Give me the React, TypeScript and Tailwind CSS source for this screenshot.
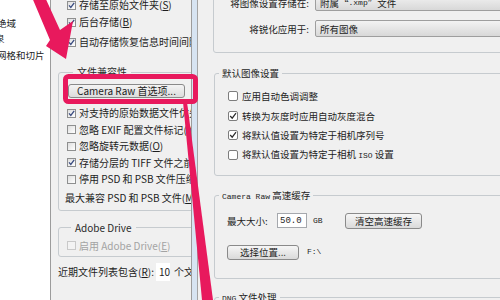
import React from "react";

function LCheck({ checked = false, disabled = false }: { checked?: boolean; disabled?: boolean }) {
  return (
    <span
      className={
        disabled
          ? "relative w-[9px] h-[9px] shrink-0 border border-[#c9c9c9] bg-[#f3f3f3]"
          : "relative w-[9px] h-[9px] shrink-0 border border-[#8e8f8f] bg-gradient-to-br from-[#dedede] to-[#ffffff]"
      }
    >
      {checked && (
        <svg viewBox="0 0 7 7" className="absolute inset-0 w-full h-full">
          <path d="M1 3.4 L2.8 5.4 L6.2 0.9" fill="none" stroke="#3a4c80" strokeWidth="1.3" />
        </svg>
      )}
    </span>
  );
}

function RCheck({ checked = false }: { checked?: boolean }) {
  return (
    <span className="relative w-[10px] h-[10px] shrink-0 border border-[#7d7d7d] rounded-[2px] bg-white">
      {checked && (
        <svg viewBox="0 0 8 8" className="absolute inset-0 w-full h-full">
          <path d="M1.2 4 L3.2 6.2 L7 1.2" fill="none" stroke="#2b2b2b" strokeWidth="1.2" />
        </svg>
      )}
    </span>
  );
}

const mono = "font-[family-name:'Liberation_Mono',monospace]";

export default function App() {
  return (
    <div className="relative w-[500px] h-[300px] overflow-hidden flex bg-white text-[#1d1d1d] font-[family-name:'Noto_Sans_CJK_SC','Noto_Sans',sans-serif]">
      {/* white left column with cut-off text */}
      <div className="w-[50px] shrink-0 overflow-hidden flex flex-col text-[9.5px] leading-[10px] text-[#222] whitespace-nowrap">
        <span className="mt-[18px] -ml-[3px]">绝域</span>
        <span className="mt-[5px] -ml-[5px]">泉</span>
        <span className="mt-[7px] -ml-[3px]">网格和切片</span>
      </div>

      {/* left dialog */}
      <div className="w-[142px] shrink-0 h-full overflow-hidden border-x border-[#9c9c9c] bg-[#f0f0f0] flex flex-col text-[10px] leading-[12px] whitespace-nowrap">
        <div className="-mt-[3px] h-[16px] flex items-center pl-[16px] gap-[3px]">
          <LCheck checked />
          <span>存储至原始文件夹(<u>S</u>)</span>
        </div>
        <div className="mt-[1px] h-[16px] flex items-center pl-[16px] gap-[3px]">
          <LCheck checked />
          <span>后台存储(<u>B</u>)</span>
        </div>
        <div className="mt-[4px] h-[16px] flex items-center pl-[16px] gap-[3px]">
          <LCheck checked />
          <span>自动存储恢复信息时间间隔</span>
        </div>

        <fieldset className="mt-[16px] ml-[7px] w-[170px] shrink-0 border border-[#c6cbcf] rounded-[3px] flex flex-col">
          <legend className="ml-[14px] px-[4px] leading-[12px] text-[#2a2a2a]">文件兼容性</legend>
          <div className="mt-[6px] ml-[9px] w-[117px] h-[14px] flex items-center justify-center border border-[#8a8a8a] rounded-[3px] bg-gradient-to-b from-[#f4f4f4] to-[#dcdcdc] text-[10px]">
            Camera Raw 首选项...
          </div>
          <div className="mt-[7px] h-[16.5px] flex items-center pl-[8px] gap-[3px]">
            <LCheck checked />
            <span>对支持的原始数据文件优先</span>
          </div>
          <div className="h-[16.5px] flex items-center pl-[8px] gap-[3px]">
            <LCheck />
            <span>忽略 EXIF 配置文件标记(<u>X</u>)</span>
          </div>
          <div className="h-[16.5px] flex items-center pl-[8px] gap-[3px]">
            <LCheck />
            <span>忽略旋转元数据(<u>O</u>)</span>
          </div>
          <div className="h-[16.5px] flex items-center pl-[8px] gap-[3px]">
            <LCheck checked />
            <span>存储分层的 TIFF 文件之前询问</span>
          </div>
          <div className="h-[16.5px] flex items-center pl-[8px] gap-[3px]">
            <LCheck />
            <span>停用 PSD 和 PSB 文件压缩</span>
          </div>
          <div className="mt-[2px] h-[16px] flex items-center pl-[6px] mb-[4px]">
            <span>最大兼容 PSD 和 PSB 文件(<u>M</u>):</span>
          </div>
        </fieldset>

        <fieldset className="mt-[11px] ml-[7px] w-[170px] shrink-0 border border-[#c6cbcf] rounded-[3px] flex flex-col">
          <legend className="ml-[12px] px-[4px] leading-[12px] text-[#2a2a2a]">Adobe Drive</legend>
          <div className="mt-[4px] h-[16px] flex items-center pl-[8px] gap-[3px] mb-[2px] text-[#a3a3a3]">
            <LCheck disabled />
            <span>启用 Adobe Drive(<u>E</u>)</span>
          </div>
        </fieldset>

        <div className="mt-[6px] h-[18px] flex items-center pl-[7px]">
          <span>近期文件列表包含(<u>R</u>):</span>
          <span className="ml-[2px] w-[20px] h-[18px] bg-white flex items-center pl-[3px]">10</span>
          <span className="ml-[4px]">个文件</span>
        </div>
      </div>

      {/* light blue window edge */}
      <div className="w-[5px] shrink-0 h-full bg-[#d7e4f2]" />

      {/* right dialog */}
      <div className="flex-1 h-full overflow-hidden border-l border-[#a4a4a4] bg-[#f0f0f0] flex flex-col text-[9.5px] leading-[12px] whitespace-nowrap">
        <div className="-mt-[10px] ml-[15px] w-[330px] shrink-0 border border-[#c6cbcf] rounded-[3px] pt-[3px] pb-[15px] flex flex-col">
          <div className="h-[17px] flex items-center">
            <span className="w-[96px] text-right pr-[1px]">将图像设置存储在:</span>
            <div className="ml-[5px] flex-1 h-[17px] border border-[#9e9e9e] rounded-[2px] bg-gradient-to-b from-[#f3f3f3] to-[#d8d8d8] flex items-center pl-[4px]">
              附属“<span className={`${mono} text-[8px]`}>.xmp</span>”文件
            </div>
          </div>
          <div className="mt-[9px] h-[17px] flex items-center">
            <span className="w-[96px] text-right pr-[1px]">将锐化应用于:</span>
            <div className="ml-[5px] flex-1 h-[17px] border border-[#9e9e9e] rounded-[2px] bg-gradient-to-b from-[#f3f3f3] to-[#d8d8d8] flex items-center pl-[4px]">
              所有图像
            </div>
          </div>
        </div>

        <fieldset className="mt-[14px] ml-[16px] w-[330px] shrink-0 border border-[#c6cbcf] rounded-[3px] flex flex-col pb-[10px]">
          <legend className="ml-[4px] px-[3px] leading-[12px]">默认图像设置</legend>
          <div className="mt-[7.5px] h-[19.5px] flex items-center pl-[13px] gap-[4px]">
            <RCheck />
            <span>应用自动色调调整</span>
          </div>
          <div className="h-[19.5px] flex items-center pl-[13px] gap-[4px]">
            <RCheck checked />
            <span>转换为灰度时应用自动灰度混合</span>
          </div>
          <div className="h-[19.5px] flex items-center pl-[13px] gap-[4px]">
            <RCheck checked />
            <span>将默认值设置为特定于相机序列号</span>
          </div>
          <div className="h-[19.5px] flex items-center pl-[13px] gap-[4px]">
            <RCheck />
            <span>
              将默认值设置为特定于相机 <span className={`${mono} text-[8px]`}>ISO</span> 设置
            </span>
          </div>
        </fieldset>

        <fieldset className="mt-[13px] ml-[16px] w-[330px] shrink-0 border border-[#c6cbcf] rounded-[3px] flex flex-col pb-[18px]">
          <legend className="ml-[4px] px-[3px] leading-[12px]">
            <span className={`${mono} text-[8px]`}>Camera Raw</span> 高速缓存
          </legend>
          <div className="mt-[10px] h-[16px] flex items-center pl-[12px]">
            <span className="w-[50px]">最大大小:</span>
            <span className={`${mono} text-[9px] w-[30px] h-[15px] border border-[#a5a8ad] bg-white flex items-center pl-[2px]`}>
              50.0
            </span>
            <span className={`${mono} text-[8px] ml-[6px] w-[10px]`}>GB</span>
            <span className="ml-[22px] w-[77px] h-[16px] border border-[#8a8a8a] rounded-[3px] bg-gradient-to-b from-[#f6f6f6] to-[#dadada] flex items-center justify-center">
              清空高速缓存
            </span>
          </div>
          <div className="mt-[16px] h-[15px] flex items-center pl-[12px]">
            <span className="w-[72px] h-[15px] border border-[#8a8a8a] rounded-[3px] bg-gradient-to-b from-[#f6f6f6] to-[#dadada] flex items-center justify-center">
              选择位置...
            </span>
            <span className={`${mono} text-[8px] ml-[8px]`}>F:\</span>
          </div>
        </fieldset>

        <fieldset className="mt-[12px] ml-[16px] w-[330px] h-[60px] shrink-0 border border-[#c6cbcf] rounded-[3px]">
          <legend className="ml-[4px] px-[3px] leading-[12px]">
            <span className={`${mono} text-[8px]`}>DNG</span> 文件处理
          </legend>
        </fieldset>
      </div>

      {/* pink annotations */}
      <svg className="absolute inset-0 pointer-events-none" width="500" height="300" viewBox="0 0 500 300">
        <rect x="65.5" y="76.5" width="130" height="25" rx="3" fill="none" stroke="#e8195d" strokeWidth="5" />
        <polygon points="31,-5 44,-5 60,30 73,21 66,59 46,46 50,40" fill="#e8195d" />
        <polygon points="183,102 187,102 213,300 202,300" fill="#e8195d" />
      </svg>
    </div>
  );
}
